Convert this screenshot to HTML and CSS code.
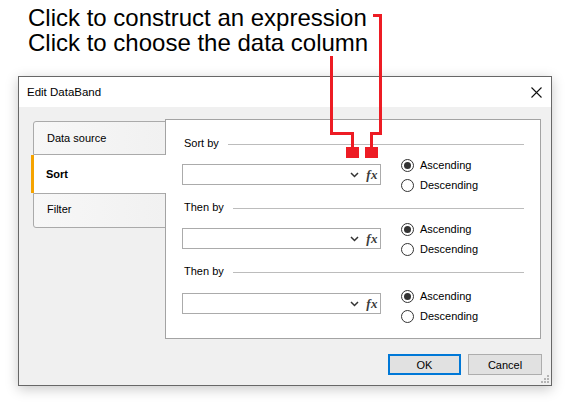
FILE: index.html
```html
<!DOCTYPE html>
<html>
<head>
<meta charset="utf-8">
<link rel="stylesheet" href="styles.css">
</head>
<body>
<div class="page">
  <div class="notes">
    <div>Click to construct an expression</div>
    <div>Click to choose the data column</div>
  </div>

  <div class="dialog">
    <div class="titlebar">
      <span class="title">Edit DataBand</span>
      <svg class="close" width="11" height="11" viewBox="0 0 11 11"><path d="M0.5 0.5 L10.5 10.5 M10.5 0.5 L0.5 10.5" stroke="#111" stroke-width="1.1" fill="none"/></svg>
    </div>

    <div class="main">
      <div class="tabs">
        <div class="tab tab-first">Data source</div>
        <div class="tab tab-active">Sort</div>
        <div class="tab tab-last">Filter</div>
      </div>

      <div class="panel">
        <div class="group">
          <div class="group-head"><span class="group-label">Sort by</span><span class="group-line"></span></div>
          <div class="group-row">
            <div class="combo">
              <svg class="chev" width="9" height="6" viewBox="0 0 9 6"><path d="M1 1 L4.5 4.5 L8 1" stroke="#333" stroke-width="1.5" fill="none"/></svg>
              <span class="fx">fx</span>
            </div>
            <div class="radios">
              <div class="radio"><span class="dot checked"></span>Ascending</div>
              <div class="radio"><span class="dot"></span>Descending</div>
            </div>
          </div>
        </div>

        <div class="group">
          <div class="group-head"><span class="group-label">Then by</span><span class="group-line"></span></div>
          <div class="group-row">
            <div class="combo">
              <svg class="chev" width="9" height="6" viewBox="0 0 9 6"><path d="M1 1 L4.5 4.5 L8 1" stroke="#333" stroke-width="1.5" fill="none"/></svg>
              <span class="fx">fx</span>
            </div>
            <div class="radios">
              <div class="radio"><span class="dot checked"></span>Ascending</div>
              <div class="radio"><span class="dot"></span>Descending</div>
            </div>
          </div>
        </div>

        <div class="group group-last">
          <div class="group-head"><span class="group-label">Then by</span><span class="group-line"></span></div>
          <div class="group-row">
            <div class="combo">
              <svg class="chev" width="9" height="6" viewBox="0 0 9 6"><path d="M1 1 L4.5 4.5 L8 1" stroke="#333" stroke-width="1.5" fill="none"/></svg>
              <span class="fx">fx</span>
            </div>
            <div class="radios">
              <div class="radio"><span class="dot checked"></span>Ascending</div>
              <div class="radio"><span class="dot"></span>Descending</div>
            </div>
          </div>
        </div>
      </div>
    </div>

    <div class="footer">
      <div class="btn btn-default">OK</div>
      <div class="btn">Cancel</div>
    </div>

    <svg class="grip" width="9" height="9" viewBox="0 0 9 9">
      <rect x="6" y="0" width="2" height="2" fill="#b4b4b4"/>
      <rect x="3" y="3" width="2" height="2" fill="#b4b4b4"/>
      <rect x="6" y="3" width="2" height="2" fill="#b4b4b4"/>
      <rect x="0" y="6" width="2" height="2" fill="#b4b4b4"/>
      <rect x="3" y="6" width="2" height="2" fill="#b4b4b4"/>
      <rect x="6" y="6" width="2" height="2" fill="#b4b4b4"/>
    </svg>
  </div>

  <svg class="arrows" width="574" height="412" viewBox="0 0 574 412">
    <polyline points="373,15.5 380.5,15.5 380.5,133.5 371.5,133.5 371.5,149" fill="none" stroke="#ed1c24" stroke-width="3"/>
    <rect x="365" y="147" width="13" height="11" fill="#ed1c24"/>
    <polyline points="331.5,56 331.5,133.5 352.5,133.5 352.5,149" fill="none" stroke="#ed1c24" stroke-width="3"/>
    <rect x="346" y="147" width="13" height="11" fill="#ed1c24"/>
  </svg>
</div>
</body>
</html>
```

FILE: styles.css
```css
* { box-sizing: border-box; }

body {
  margin: 0;
  background: #ffffff;
}

.page {
  position: relative;
  width: 574px;
  height: 412px;
  overflow: hidden;
}

.notes {
  padding: 5px 0 0 28px;
  font-family: "Liberation Sans", Arial, sans-serif;
  font-size: 24px;
  line-height: 25px;
  color: #000;
}

.dialog {
  position: relative;
  margin: 21px 0 0 18px;
  width: 534px;
  height: 310px;
  border: 1px solid #676767;
  background: #f0f0f0;
  box-shadow: 0 3px 12px rgba(0, 0, 0, 0.22);
  display: flex;
  flex-direction: column;
  font-family: "Liberation Sans", Arial, sans-serif;
  font-size: 11px;
  color: #000;
}

.titlebar {
  height: 30px;
  background: #fff;
  display: flex;
  align-items: center;
  justify-content: space-between;
  padding: 0 9px 0 8px;
}

.title {
  font-size: 11.5px;
}

.close {
  display: block;
}

.main {
  display: flex;
  padding: 12px 10px 0 14px;
}

.tabs {
  width: 133px;
  margin-right: -1px;
  margin-top: 2px;
  display: flex;
  flex-direction: column;
}

.tab {
  display: flex;
  align-items: center;
  padding-left: 13px;
  background: linear-gradient(to right, #f7f7f7, #f1f1f1);
  border: 1px solid #aaaaaa;
}

.tab-first {
  height: 34px;
  border-top-left-radius: 3px;
}

.tab-active {
  position: relative;
  z-index: 1;
  height: 38px;
  margin-left: -2px;
  margin-right: -1px;
  border: none;
  border-left: 3px solid #f5a300;
  background: #fff;
  padding-left: 12px;
  font-weight: bold;
}

.tab-last {
  height: 35px;
  padding-bottom: 3px;
  border-bottom-left-radius: 3px;
}

.panel {
  width: 376px;
  height: 220px;
  background: #fff;
  border: 1px solid #a3a3a3;
  padding: 13px 16px 0 16px;
}

.group {
  height: 64px;
}

.group-head {
  height: 20px;
  display: flex;
  align-items: center;
}

.group-label {
  padding-left: 2px;
}

.group-line {
  flex: 1;
  height: 1px;
  margin-left: 9px;
  margin-top: 2px;
  background: #bcbcbc;
}

.group-row {
  display: flex;
  margin-top: 2px;
}

.group-last .group-row {
  margin-top: 3px;
}

.group-last .radios {
  margin-top: 2px;
}

.combo {
  width: 199px;
  height: 21px;
  margin-top: 9px;
  border: 1px solid #ababab;
  background: #fff;
  display: flex;
  align-items: center;
  justify-content: flex-end;
  padding-right: 2px;
}

.chev {
  display: block;
  margin-right: 7px;
  margin-top: 1px;
}

.fx {
  font-family: "Liberation Serif", "Times New Roman", serif;
  font-style: italic;
  font-weight: bold;
  font-size: 13px;
  color: #3c3c3c;
  letter-spacing: 0.5px;
}

.radios {
  margin-left: 20px;
  display: flex;
  flex-direction: column;
}

.radio {
  height: 20px;
  display: flex;
  align-items: center;
}

.dot {
  width: 13px;
  height: 13px;
  border: 1px solid #333;
  border-radius: 50%;
  background: #fff;
  margin-right: 6px;
  display: flex;
  align-items: center;
  justify-content: center;
}

.dot.checked::after {
  content: "";
  width: 7px;
  height: 7px;
  border-radius: 50%;
  background: #333;
}

.footer {
  display: flex;
  justify-content: flex-end;
  gap: 7px;
  padding: 15px 9px 0 0;
}

.btn {
  height: 21px;
  width: 74px;
  border: 1px solid #adadad;
  background: #e1e1e1;
  display: flex;
  align-items: center;
  justify-content: center;
}

.btn-default {
  width: 73px;
  border: 2px solid #0078d7;
}

.grip {
  position: absolute;
  right: 1px;
  bottom: 1px;
}

.arrows {
  position: absolute;
  left: 0;
  top: 0;
  pointer-events: none;
}
```
